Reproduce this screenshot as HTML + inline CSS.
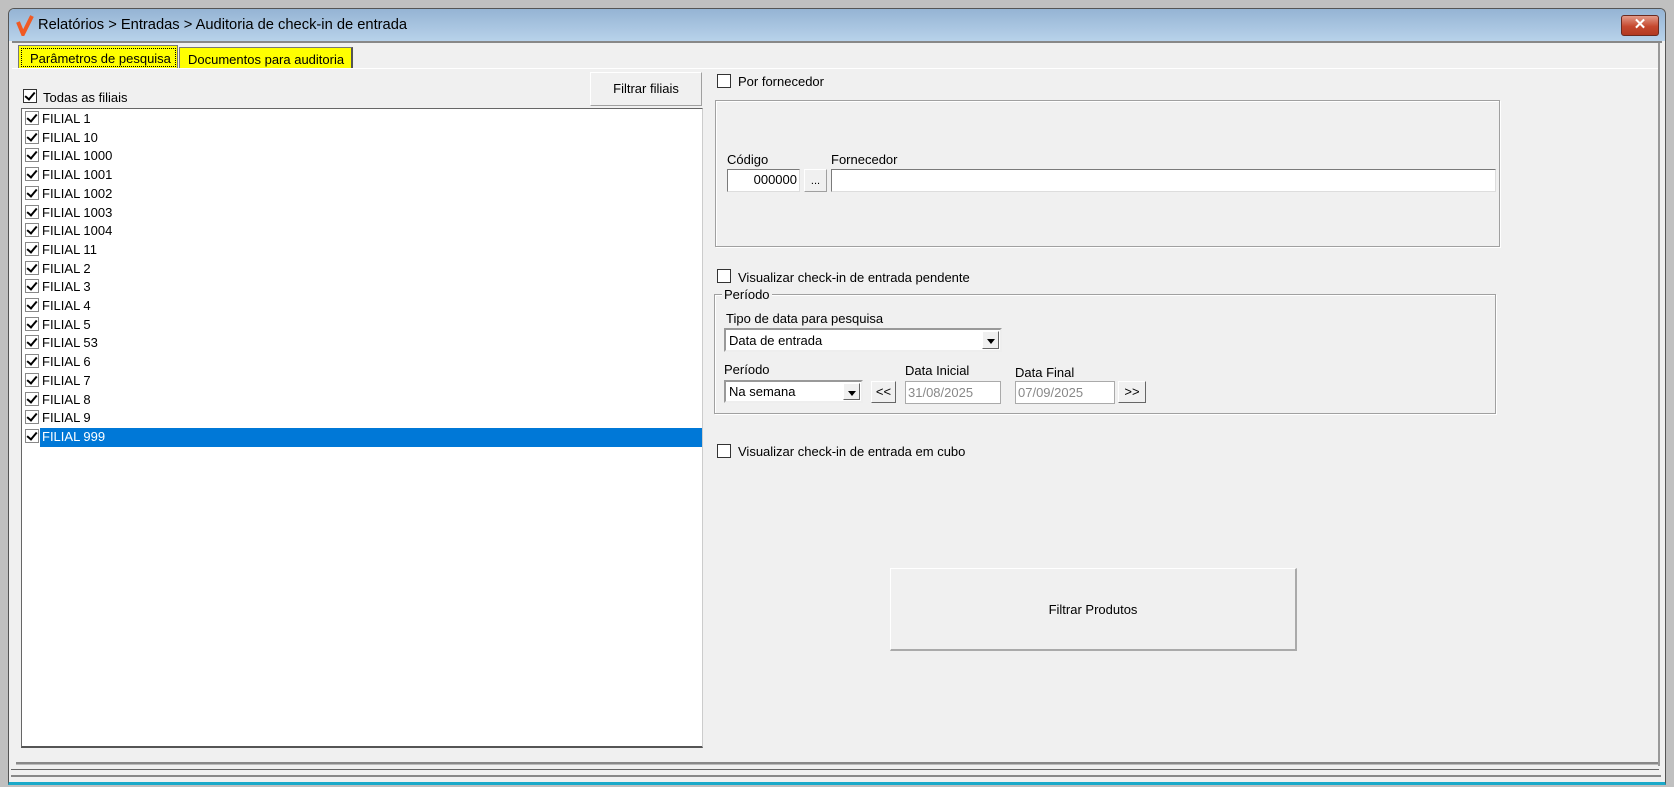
<!DOCTYPE html>
<html><head><meta charset="utf-8"><style>
*{box-sizing:border-box;margin:0;padding:0}
body{width:1674px;height:787px;background:#c0c0c0;position:relative;overflow:hidden;font-family:"Liberation Sans",sans-serif;font-size:13px;color:#000}
.a{position:absolute}
.t{position:absolute;white-space:nowrap;line-height:15px}
.cb{position:absolute;width:14px;height:14px;border:1px solid #333;background:#fff}
.cbs{position:absolute;width:14px;height:14px;border:1px solid #888;background:#fff}
.ck::after{content:"";position:absolute;left:3px;top:0px;width:4px;height:8px;border:solid #000;border-width:0 2.5px 2.5px 0;transform:rotate(40deg)}
.in{position:absolute;background:#fff;border:1px solid #7a7a7a;border-right-color:#ddd;border-bottom-color:#ddd}
.btn{position:absolute;background:#f0f0f0;border:1px solid #fff;border-right-color:#a0a0a0;border-bottom-color:#a0a0a0;text-align:center}
.grp{position:absolute;border:1px solid #a0a0a0;box-shadow:inset 1px 1px 0 #fff,1px 1px 0 #fff}
.dd{position:absolute;width:17px;top:1px;bottom:1px;right:1px;background:#f0f0f0;border:1px solid #fff;border-right-color:#666;border-bottom-color:#666}
.dd::after{content:"";position:absolute;left:4px;top:7px;border:4px solid transparent;border-top:5px solid #000}
</style></head><body>
<div class="a" style="left:8px;top:8px;width:1658px;height:777px;background:#f0f0f0;border:1px solid #555;border-radius:6px 6px 0 0;border-bottom:3px solid #1aa9c9"></div>
<div class="a" style="left:9px;top:9px;width:1656px;height:32px;background:linear-gradient(#95b4d4,#b8d2ea);border-radius:5px 5px 0 0"></div>
<svg class="a" style="left:16px;top:14px" width="18" height="22"><path d="M2 8 L7 20 L16 2" fill="none" stroke="#f05a24" stroke-width="4"/></svg>
<div class="t" style="left:38px;top:18px;font-size:14.7px">Relatórios &gt; Entradas &gt; Auditoria de check-in de entrada</div>
<div class="a" style="left:1621px;top:15px;width:38px;height:21px;background:linear-gradient(#e39b8a,#c5482f 55%,#b23a22);border:1px solid #6b2a20;border-radius:3px;color:#fff;font-weight:bold;text-align:center;font-size:15px;line-height:18px">✕</div>
<div class="a" style="left:12px;top:41px;width:1650px;height:2px;background:#888"></div>
<div class="a" style="left:1658px;top:43px;width:2px;height:723px;background:#999"></div>
<!-- tabs -->
<div class="a" style="left:18px;top:45px;width:160px;height:23px;background:#ffff00;border:1px solid #777;border-bottom:none"></div>
<div class="a" style="left:21px;top:48px;width:155px;height:19px;border:1px dotted #000"></div>
<div class="t" style="left:30px;top:51px">Parâmetros de pesquisa</div>
<div class="a" style="left:179px;top:47px;width:174px;height:21px;background:#ffff00;border:1px solid #777;border-bottom:none;border-right:2px solid #555"></div>
<div class="t" style="left:188px;top:52px">Documentos para auditoria</div>
<div class="a" style="left:12px;top:68px;width:1646px;height:1px;background:#fff"></div>
<!-- left -->
<div class="btn" style="left:590px;top:72px;width:112px;height:34px;line-height:32px">Filtrar filiais</div>
<div class="cb ck" style="left:23px;top:89px"></div>
<div class="t" style="left:43px;top:90px">Todas as filiais</div>
<div class="in" style="left:21px;top:108px;width:682px;height:640px;border-color:#666 #ccc #555 #666;border-width:1px 1px 2px 1px"></div>
<div class="a" style="left:40px;top:428px;width:662px;height:19px;background:#0078d7"></div>
<div id="rows"></div>
<!-- right -->
<div class="cb" style="left:717px;top:74px"></div>
<div class="t" style="left:738px;top:74px">Por fornecedor</div>
<div class="grp" style="left:715px;top:100px;width:785px;height:147px"></div>
<div class="t" style="left:727px;top:152px">Código</div>
<div class="t" style="left:831px;top:152px">Fornecedor</div>
<div class="in" style="left:727px;top:169px;width:73px;height:23px;text-align:right;padding-right:2px;line-height:20px">000000</div>
<div class="btn" style="left:804px;top:169px;width:23px;height:23px;line-height:22px;font-size:11px">...</div>
<div class="in" style="left:831px;top:169px;width:665px;height:23px"></div>
<div class="cb" style="left:717px;top:269px"></div>
<div class="t" style="left:738px;top:270px">Visualizar check-in de entrada pendente</div>
<div class="grp" style="left:714px;top:294px;width:782px;height:120px"></div>
<div class="t" style="left:722px;top:287px;background:#f0f0f0;padding:0 2px">Período</div>
<div class="t" style="left:726px;top:311px">Tipo de data para pesquisa</div>
<div class="in" style="left:724px;top:328px;width:278px;height:24px;line-height:21px;padding-left:3px;border:2px solid #999;border-right-color:#eee;border-bottom-color:#eee">Data de entrada<div class="dd"></div></div>
<div class="t" style="left:724px;top:362px">Período</div>
<div class="t" style="left:905px;top:363px">Data Inicial</div>
<div class="t" style="left:1015px;top:365px">Data Final</div>
<div class="in" style="left:724px;top:380px;width:139px;height:23px;line-height:20px;padding-left:3px;border:2px solid #999;border-right-color:#eee;border-bottom-color:#eee">Na semana<div class="dd"></div></div>
<div class="btn" style="left:871px;top:381px;width:25px;height:22px;line-height:20px;border-color:#fff #666 #666 #fff">&lt;&lt;</div>
<div class="in" style="left:905px;top:381px;width:96px;height:23px;line-height:21px;padding-left:2px;color:#888;border-color:#aaa">31/08/2025</div>
<div class="in" style="left:1015px;top:381px;width:100px;height:23px;line-height:21px;padding-left:2px;color:#888;border-color:#aaa">07/09/2025</div>
<div class="btn" style="left:1118px;top:381px;width:28px;height:22px;line-height:20px;border-color:#fff #666 #666 #fff">&gt;&gt;</div>
<div class="cb" style="left:717px;top:444px"></div>
<div class="t" style="left:738px;top:444px">Visualizar check-in de entrada em cubo</div>
<div class="btn" style="left:890px;top:568px;width:407px;height:83px;line-height:81px;border-right:2px solid #aaa;border-bottom:2px solid #aaa">Filtrar Produtos</div>
<!-- bottom lines -->
<div class="a" style="left:16px;top:762px;width:1642px;height:3px;background:#888;border-bottom:1px solid #bbb"></div>
<div class="a" style="left:11px;top:769px;width:1648px;height:1px;background:#666"></div>
<div class="a" style="left:11px;top:775px;width:1650px;height:2px;background:#888"></div>
<script>
var n=["1","10","1000","1001","1002","1003","1004","11","2","3","4","5","53","6","7","8","9","999"],h="";
n.forEach(function(x,i){var y=110+i*18.7;h+='<div class="cbs ck" style="left:25px;top:'+(y+1)+'px"></div><div class="t" style="left:42px;top:'+(y+1)+'px;'+(i==17?'color:#fff':'')+'">FILIAL '+x+'</div>';});
document.getElementById("rows").innerHTML=h;
</script>
</body></html>
